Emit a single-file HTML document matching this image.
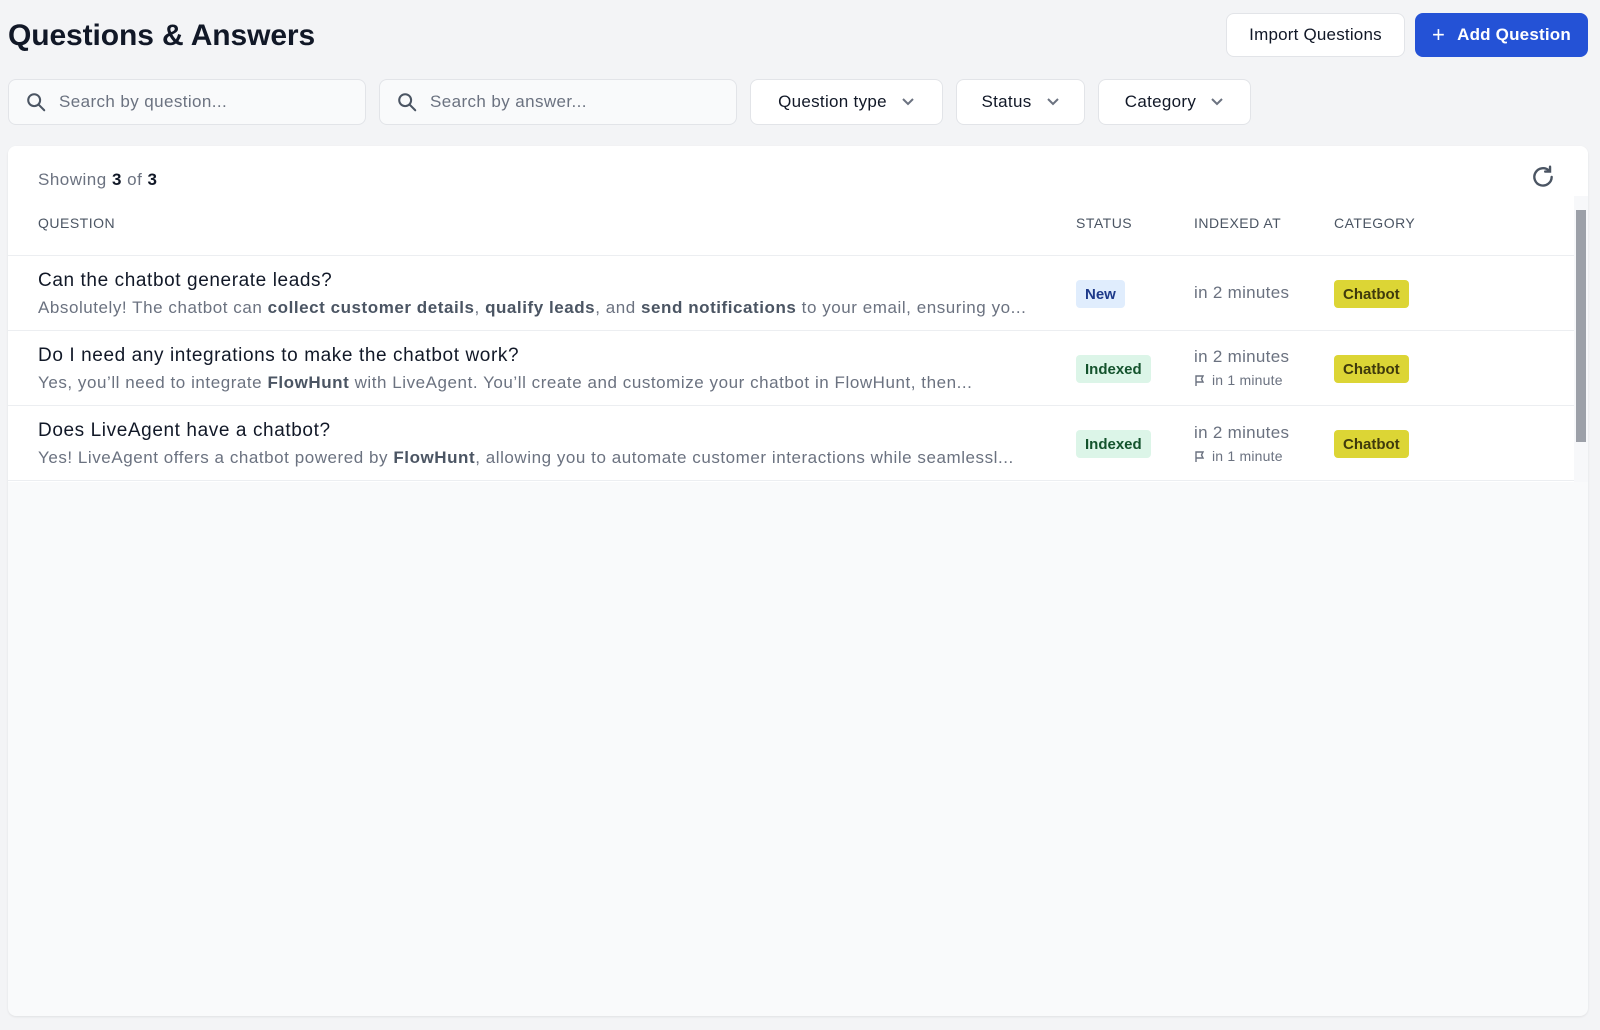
<!DOCTYPE html>
<html><head><meta charset="utf-8"><style>
*{box-sizing:border-box;margin:0;padding:0}
body{width:1600px;height:1030px;background:#f3f4f6;font-family:"Liberation Sans",sans-serif;color:#111827;position:relative;overflow:hidden}
.a{position:absolute}
h1{position:absolute;left:8px;top:19px;font-size:30px;font-weight:700;color:#111827;letter-spacing:-0.1px}
.btn{position:absolute;top:13px;height:44px;border-radius:8px;font-size:17px;display:flex;align-items:center;justify-content:center;letter-spacing:0.2px}
.inp{position:absolute;top:79px;height:46px;border:1px solid #e2e4e8;border-radius:8px;background:#f9fafb;display:flex;align-items:center;font-size:17px;color:#6b7280;letter-spacing:0.4px}
.inp svg{margin:0 12px 0 16px}
.sel{position:absolute;top:79px;height:46px;border:1px solid #e2e4e8;border-radius:8px;background:#fff;display:flex;align-items:center;justify-content:center;font-size:17px;color:#111827;gap:14px;letter-spacing:0.3px}
.card{position:absolute;left:8px;top:146px;width:1580px;height:870px;background:#f9fafb;border-radius:8px;box-shadow:0 1px 2px rgba(0,0,0,.08);overflow:hidden}
.top{position:absolute;left:0;top:0;width:1580px;height:336px;background:#fff}
.th{position:absolute;top:69px;font-size:14px;color:#4b5563;letter-spacing:.5px}
.row{position:absolute;left:0;width:1566px;height:76px;border-top:1px solid #eceef1}
.q{position:absolute;left:30px;top:14px;font-size:19px;color:#111827;letter-spacing:0.6px}
.ans{position:absolute;left:30px;top:42px;font-size:17px;color:#6b7280;white-space:nowrap;width:1000px;overflow:hidden;text-overflow:ellipsis;letter-spacing:0.55px}
.ans b{color:#4b5563}
.badge{position:absolute;top:24px;height:28px;border-radius:4px;font-size:15px;font-weight:700;display:flex;align-items:center;padding:0 9px}
.t1{position:absolute;left:1186px;font-size:17px;color:#6b7280;letter-spacing:0.3px}
.t2{position:absolute;left:1186px;font-size:14px;color:#6b7280;display:flex;align-items:center;gap:6px;letter-spacing:0.2px}
</style></head><body>
<h1>Questions &amp; Answers</h1>
<div class="btn" style="left:1226px;width:179px;background:#fff;border:1px solid #e2e4e8;color:#111827">Import Questions</div>
<div class="btn" style="left:1415px;width:173px;background:#2452d6;color:#fff;font-weight:700"><span style="font-weight:400;font-size:22px;margin-right:12px">+</span>Add Question</div>

<div class="inp" style="left:8px;width:358px"><svg width="22" height="22" viewBox="0 0 24 24" fill="none" stroke="#4b5563" stroke-width="2.2"><circle cx="10" cy="10" r="6.5"/><path d="M15 15l6 6" stroke-linecap="round"/></svg>Search by question...</div>
<div class="inp" style="left:379px;width:358px"><svg width="22" height="22" viewBox="0 0 24 24" fill="none" stroke="#4b5563" stroke-width="2.2"><circle cx="10" cy="10" r="6.5"/><path d="M15 15l6 6" stroke-linecap="round"/></svg>Search by answer...</div>
<div class="sel" style="left:750px;width:193px">Question type<svg width="14" height="10" viewBox="0 0 14 10"><path d="M2 2l5 5 5-5" fill="none" stroke="#6b7280" stroke-width="2"/></svg></div>
<div class="sel" style="left:956px;width:129px">Status<svg width="14" height="10" viewBox="0 0 14 10"><path d="M2 2l5 5 5-5" fill="none" stroke="#6b7280" stroke-width="2"/></svg></div>
<div class="sel" style="left:1098px;width:153px">Category<svg width="14" height="10" viewBox="0 0 14 10"><path d="M2 2l5 5 5-5" fill="none" stroke="#6b7280" stroke-width="2"/></svg></div>

<div class="card">
<div class="top">
<div class="a" style="left:30px;top:24px;font-size:17px;color:#6b7280;letter-spacing:0.5px">Showing <b style="color:#111827">3</b> of <b style="color:#111827">3</b></div>
<svg class="a" style="left:1522px;top:18px" width="26" height="26" viewBox="0 0 24 24" fill="none" stroke="#4b5563" stroke-width="2.2" stroke-linecap="round"><path d="M20 12a8 8 0 1 1-2.3-5.7"/><path d="M18.5 2.5v4.5H14"/></svg>
<div class="th" style="left:30px">QUESTION</div>
<div class="th" style="left:1068px">STATUS</div>
<div class="th" style="left:1186px">INDEXED AT</div>
<div class="th" style="left:1326px">CATEGORY</div>

<div class="row" style="top:109px">
<div class="q">Can the chatbot generate leads?</div>
<div class="ans">Absolutely! The chatbot can <b>collect customer details</b>, <b>qualify leads</b>, and <b>send notifications</b> to your email, ensuring yo...</div>
<div class="badge" style="left:1068px;background:#e0edfd;color:#1e3a8a">New</div>
<div class="t1" style="top:27px">in 2 minutes</div>
<div class="badge" style="left:1326px;background:#dcd535;color:#3f3a0c">Chatbot</div>
</div>
<div class="row" style="top:184px">
<div class="q">Do I need any integrations to make the chatbot work?</div>
<div class="ans">Yes, you’ll need to integrate <b>FlowHunt</b> with LiveAgent. You’ll create and customize your chatbot in FlowHunt, then...</div>
<div class="badge" style="left:1068px;background:#dcf5e8;color:#14532d">Indexed</div>
<div class="t1" style="top:16px">in 2 minutes</div>
<div class="t2" style="top:41px"><svg width="12" height="13" viewBox="0 0 12 13" fill="none" stroke="#6b7280" stroke-width="1.4"><path d="M2 12V2h7l-1.5 3L9 8H2"/></svg>in 1 minute</div>
<div class="badge" style="left:1326px;background:#dcd535;color:#3f3a0c">Chatbot</div>
</div>
<div class="row" style="top:259px;border-bottom:1px solid #eceef1">
<div class="q">Does LiveAgent have a chatbot?</div>
<div class="ans">Yes! LiveAgent offers a chatbot powered by <b>FlowHunt</b>, allowing you to automate customer interactions while seamlessl...</div>
<div class="badge" style="left:1068px;background:#dcf5e8;color:#14532d">Indexed</div>
<div class="t1" style="top:17px">in 2 minutes</div>
<div class="t2" style="top:42px"><svg width="12" height="13" viewBox="0 0 12 13" fill="none" stroke="#6b7280" stroke-width="1.4"><path d="M2 12V2h7l-1.5 3L9 8H2"/></svg>in 1 minute</div>
<div class="badge" style="left:1326px;background:#dcd535;color:#3f3a0c">Chatbot</div>
</div>
<div class="a" style="left:1566px;top:50px;width:14px;height:286px;background:#f7f8fa"></div>
<div class="a" style="left:1568px;top:64px;width:10px;height:232px;background:#9ca0a8"></div>
</div>
</div>
</body></html>
